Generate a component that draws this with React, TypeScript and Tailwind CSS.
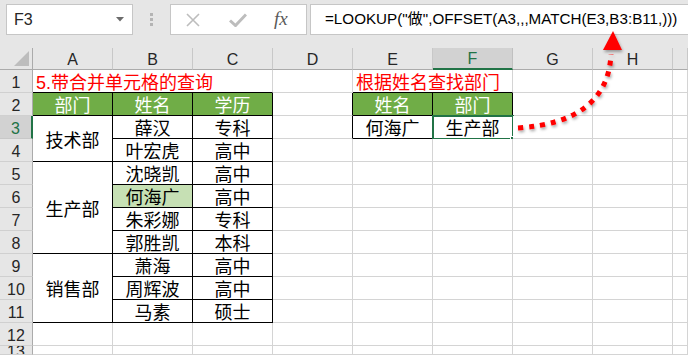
import React from "react";

type CellProps = {
  children?: React.ReactNode;
  span?: string;
  br?: boolean;
  bb?: boolean;
  head?: boolean;
  fill?: string;
  align?: "left" | "center";
  red?: boolean;
  extra?: React.ReactNode;
};

function Cell({ children, span = "", br, bb, head, fill, align = "center", red, extra }: CellProps) {
  return (
    <div
      className={[
        "relative flex items-center border-r border-b text-[18px] leading-none whitespace-nowrap",
        span,
        br ? "border-r-black" : "border-r-[#d4d4d4]",
        bb ? "border-b-black" : "border-b-[#d4d4d4]",
        head ? "bg-[#70ad47] text-white" : fill ? fill : "bg-white",
        red ? "text-[#ff0000]" : head ? "" : "text-black",
        align === "left" ? "justify-start pl-[3px]" : "justify-center",
      ].join(" ")}
    >
      <span className="relative top-[2px]">{children}</span>
      {extra}
    </div>
  );
}

function RowHead({ n, active }: { n: number; active?: boolean }) {
  return (
    <div
      className={
        active
          ? "flex items-center justify-center pt-[3px] bg-[#d2d2d2] border-b border-b-[#c8c8c8] border-r-2 border-r-[#217346] text-[#217346] text-[16px] overflow-hidden"
          : "flex items-center justify-center pt-[3px] bg-[#e6e6e6] border-b border-b-[#d0d0d0] border-r border-r-[#ababab] text-[#262626] text-[16px] overflow-hidden"
      }
    >
      {n}
    </div>
  );
}

function Blank({ br, bb }: { br?: boolean; bb?: boolean }) {
  return <Cell br={br} bb={bb} />;
}

const COLS = ["A", "B", "C", "D", "E", "F", "G", "H", ""];

export default function App() {
  const plainRows = (from: number, to: number) => {
    const out: React.ReactNode[] = [];
    for (let r = from; r <= to; r++) {
      out.push(<RowHead key={"h" + r} n={r} />);
      for (let c = 0; c < 9; c++) out.push(<Blank key={r + "-" + c} />);
    }
    return out;
  };
  const tail = (row: number) => COLS.slice(3).map((c) => <Blank key={"r" + row + c} />);

  return (
    <div className="relative w-[688px] h-[355px] overflow-hidden bg-white" style={{ fontFamily: '"Liberation Sans", "Noto Sans CJK SC", sans-serif' }}>
      {/* formula bar */}
      <div className="flex items-start h-[48px] bg-[#e6e6e6] pt-[4px]">
        <div className="shrink-0 ml-[6px] w-[127px] h-[31px] bg-white border border-[#c6c6c6] flex items-center justify-between pl-[7px] pr-[8px]">
          <span className="text-[16px] text-[#262626]">F3</span>
          <svg width="8" height="5" viewBox="0 0 8 5"><path d="M0 0h8L4 4.5z" fill="#6b6b6b" /></svg>
        </div>
        <div className="shrink-0 w-[37px] h-[31px] flex flex-col items-center justify-center gap-[2px]">
          <div className="w-[3px] h-[3px] bg-[#b4b4b4]" />
          <div className="w-[3px] h-[3px] bg-[#b4b4b4]" />
          <div className="w-[3px] h-[3px] bg-[#b4b4b4]" />
        </div>
        <div className="shrink-0 w-[137px] h-[31px] bg-white border border-[#c6c6c6] flex items-center">
          <svg className="ml-[15px]" width="14" height="14" viewBox="0 0 14 14">
            <path d="M1 1L13 13M13 1L1 13" stroke="#bdbdbd" strokeWidth="1.6" />
          </svg>
          <svg className="ml-[29px]" width="18" height="14" viewBox="0 0 18 14">
            <path d="M1 7.5L6.5 12.5L17 1.5" stroke="#bdbdbd" strokeWidth="3" fill="none" />
          </svg>
          <span className="ml-[27px] text-[19px] italic text-[#5a5a5a]" style={{ fontFamily: '"Liberation Serif", serif' }}>fx</span>
        </div>
        <div className="ml-[3px] flex-1 min-w-0 overflow-hidden h-[31px] bg-white border-y border-l border-[#c6c6c6] flex items-center pl-[14px]">
          <span className="text-[15.2px] text-black whitespace-nowrap">=LOOKUP("做",OFFSET(A3,,,MATCH(E3,B3:B11,)))</span>
        </div>
      </div>

      {/* sheet */}
      <div className="grid grid-cols-[33px_repeat(8,80px)_15px] grid-rows-[22px_repeat(12,23px)_9px]">
        <div className="relative bg-[#e6e6e6] border-r border-r-[#ababab] border-b border-b-[#ababab]">
          <svg className="absolute right-[3px] bottom-[3px]" width="15" height="15" viewBox="0 0 15 15"><path d="M15 0V15H0z" fill="#bdbdbd" /></svg>
        </div>
        {COLS.map((c) =>
          c === "F" ? (
            <div key={c} className="flex items-center justify-center pt-[2px] bg-[#d2d2d2] border-r border-r-[#c0c0c0] border-b-2 border-b-[#217346] text-[#217346] text-[16px]">{c}</div>
          ) : (
            <div key={c + "x"} className="flex items-center justify-center pt-[2px] bg-[#e6e6e6] border-r border-r-[#c8c8c8] border-b border-b-[#ababab] text-[#262626] text-[16px]">{c}</div>
          )
        )}

        <RowHead n={1} />
        <Cell span="col-span-3" bb align="left" red>5.带合并单元格的查询</Cell>
        <Blank />
        <Cell span="col-span-2" bb align="left" red>根据姓名查找部门</Cell>
        <Blank />
        <Blank />
        <Blank />

        <RowHead n={2} />
        <Cell br bb head>部门</Cell>
        <Cell br bb head>姓名</Cell>
        <Cell br bb head>学历</Cell>
        <Blank br />
        <Cell br bb head>姓名</Cell>
        <Cell br bb head>部门</Cell>
        <Blank />
        <Blank />
        <Blank />

        <RowHead n={3} active />
        <Cell span="row-span-2" br bb>技术部</Cell>
        <Cell br bb>薛汉</Cell>
        <Cell br bb>专科</Cell>
        <Blank br />
        <Cell br bb>何海广</Cell>
        <Cell
          br
          bb
          extra={
            <>
              <div className="absolute -left-[1px] -top-[1px] w-[82px] h-[25px] border-2 border-[#217346]" />
              <div className="absolute -right-[5px] -bottom-[5px] w-[7px] h-[7px] bg-[#217346] border border-white" />
            </>
          }
        >
          生产部
        </Cell>
        <Blank />
        <Blank />
        <Blank />

        <RowHead n={4} />
        <Cell br bb>叶宏虎</Cell>
        <Cell br bb>高中</Cell>
        {tail(4)}

        <RowHead n={5} />
        <Cell span="row-span-4" br bb>生产部</Cell>
        <Cell br bb>沈晓凯</Cell>
        <Cell br bb>高中</Cell>
        {tail(5)}

        <RowHead n={6} />
        <Cell br bb fill="bg-[#c6e0b4]">何海广</Cell>
        <Cell br bb>高中</Cell>
        {tail(6)}

        <RowHead n={7} />
        <Cell br bb>朱彩娜</Cell>
        <Cell br bb>专科</Cell>
        {tail(7)}

        <RowHead n={8} />
        <Cell br bb>郭胜凯</Cell>
        <Cell br bb>本科</Cell>
        {tail(8)}

        <RowHead n={9} />
        <Cell span="row-span-3" br bb>销售部</Cell>
        <Cell br bb>萧海</Cell>
        <Cell br bb>高中</Cell>
        {tail(9)}

        <RowHead n={10} />
        <Cell br bb>周辉波</Cell>
        <Cell br bb>高中</Cell>
        {tail(10)}

        <RowHead n={11} />
        <Cell br bb>马素</Cell>
        <Cell br bb>硕士</Cell>
        {tail(11)}

        {plainRows(12, 13)}
      </div>

      {/* red dotted arrow */}
      <svg className="absolute inset-0 pointer-events-none" width="688" height="355" viewBox="0 0 688 355">
        <defs>
          <filter id="sh" x="-20%" y="-20%" width="140%" height="140%">
            <feGaussianBlur in="SourceAlpha" stdDeviation="1.5" />
            <feOffset dx="1" dy="2" result="b" />
            <feComponentTransfer><feFuncA type="linear" slope="0.35" /></feComponentTransfer>
            <feMerge><feMergeNode /><feMergeNode in="SourceGraphic" /></feMerge>
          </filter>
        </defs>
        <g filter="url(#sh)">
          <path d="M518 128 Q608 122 611 54" stroke="#ff0000" strokeWidth="5" strokeDasharray="5 6" fill="none" />
          <polygon points="613,31 603,50 622,50" fill="#ff0000" />
        </g>
      </svg>
    </div>
  );
}
